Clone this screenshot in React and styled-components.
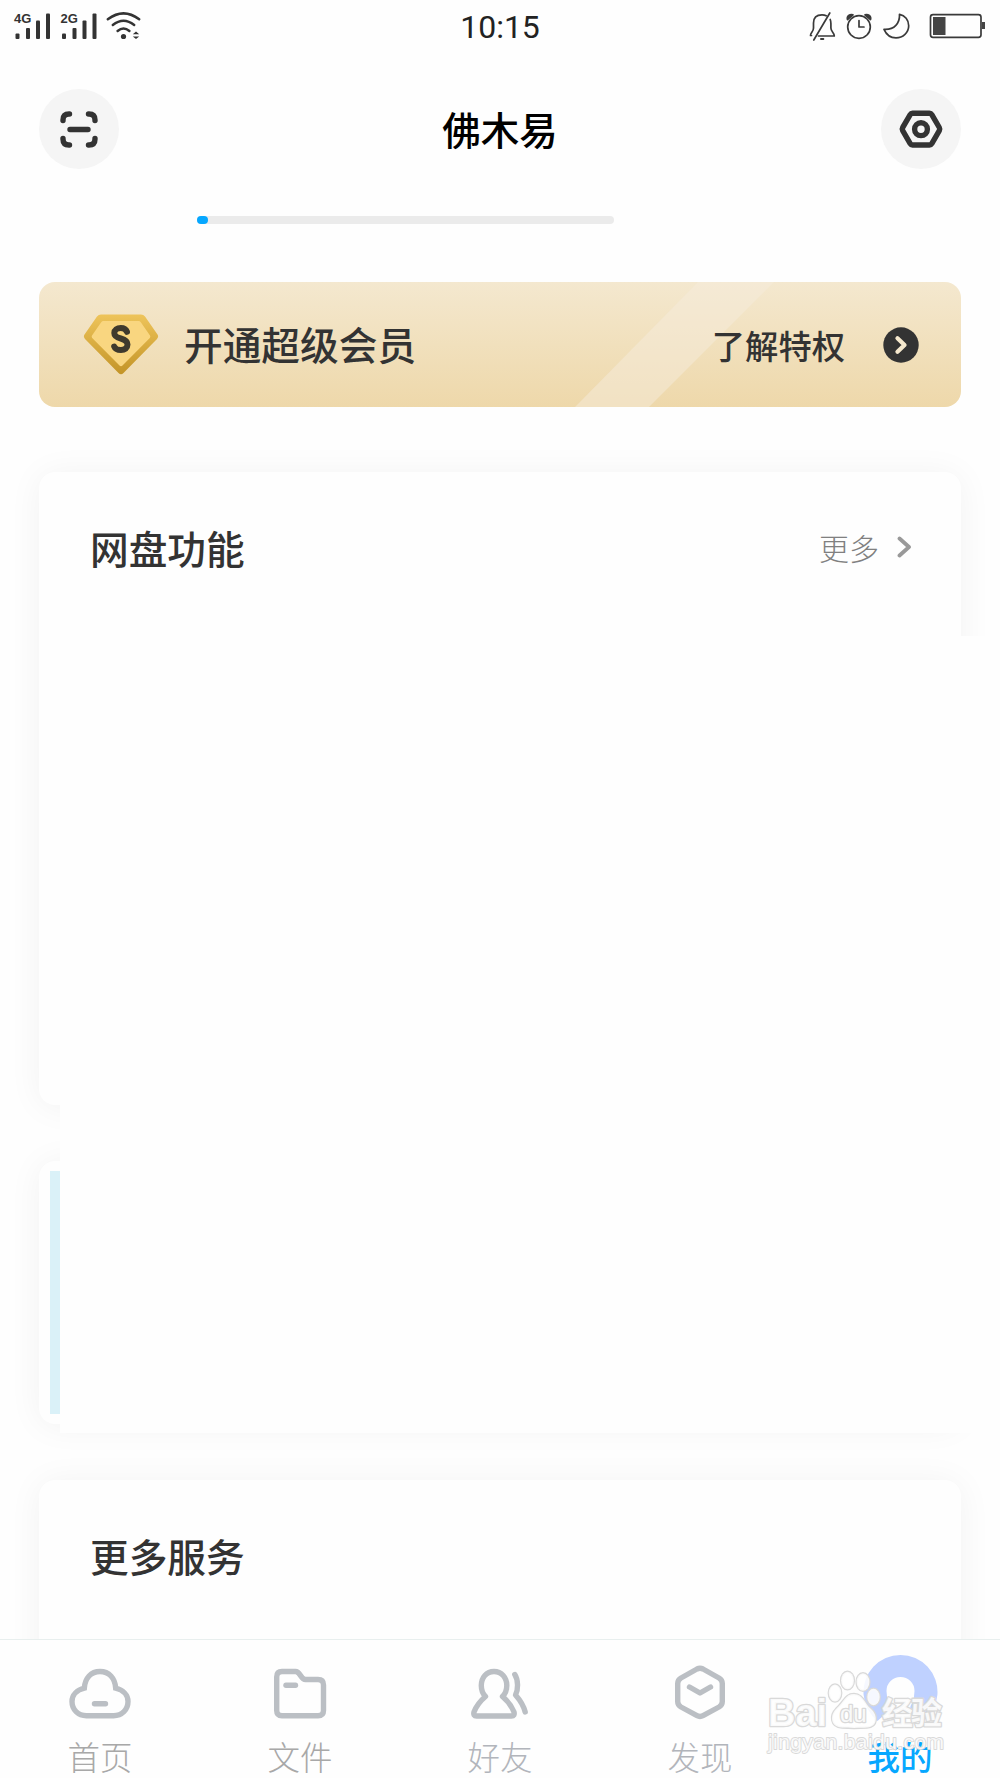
import styled, { createGlobalStyle } from 'styled-components';

const GlobalStyle = createGlobalStyle`
    * {
        box-sizing: border-box;
    }
    body {
        margin: 0;
        background: #fefefe;
        font-family: 'Noto Sans', 'Noto Sans CJK SC', sans-serif;
    }
`;

const Screen = styled.div`
    position: relative;
    display: flex;
    flex-direction: column;
    width: 1000px;
    height: 1778px;
    overflow: hidden;
    background: #fefefe;
    color: #333;
`;

const StatusBar = styled.div`
    display: grid;
    grid-template-columns: 1fr auto 1fr;
    align-items: center;
    height: 52px;
    flex: none;

    svg {
        display: block;
        margin-top: -2px;
    }
    svg:last-child {
        justify-self: end;
    }
`;

const Clock = styled.div`
    font-family: Roboto, sans-serif;
    font-size: 32px;
    line-height: 52px;
    padding-top: 1px;
    color: #222;
`;

const Header = styled.div`
    display: flex;
    align-items: center;
    justify-content: space-between;
    height: 80px;
    margin: 37px 39px 0;
    flex: none;
`;

const RoundButton = styled.div`
    display: flex;
    width: 80px;
    height: 80px;
    border-radius: 50%;
    background: #f5f5f5;
`;

const UserName = styled.div`
    font-family: 'Noto Sans CJK SC', sans-serif;
    font-size: 38.5px;
    font-weight: 500;
    line-height: 78px;
    height: 80px;
    color: #000;
`;

const Capacity = styled.div`
    width: 417px;
    height: 8px;
    margin: 47px 0 58px 197px;
    border-radius: 4px;
    background: #ebebeb;
    flex: none;
`;

const CapacityUsed = styled.div`
    height: 8px;
    border-radius: 4px;
    background: #06a7ff;
`;

const VipBanner = styled.div`
    display: flex;
    align-items: center;
    height: 125px;
    margin: 0 39px;
    padding: 0 42px 0 44px;
    border-radius: 16px;
    background: linear-gradient(#f4e8cf, #eed8aa);
    position: relative;
    overflow: hidden;
    flex: none;

    &::before {
        content: '';
        position: absolute;
        top: 0;
        left: 536px;
        width: 199px;
        height: 125px;
        background: rgba(246, 236, 220, 0.5);
        clip-path: polygon(123px 0, 199px 0, 74px 100%, 0 100%);
    }
    > * {
        position: relative;
    }
`;

const VipTitle = styled.div`
    margin-left: 25px;
    font-family: 'Noto Sans CJK SC', sans-serif;
    font-size: 38.7px;
    font-weight: 500;
    line-height: 123px;
    height: 125px;
`;

const VipLink = styled.div`
    margin: 0 38px 0 auto;
    font-family: 'Noto Sans CJK SC', sans-serif;
    font-size: 33.3px;
    font-weight: 500;
    line-height: 125px;
`;

const Card = styled.div`
    height: ${({ $height }) => $height}px;
    margin: ${({ $gap }) => $gap}px 39px 0;
    padding: ${({ $padding }) => $padding || '0 48px 0 51px'};
    border-radius: 16px;
    background: #fefefe;
    box-shadow: 0 2px 34px rgba(0, 0, 0, 0.05);
    flex: none;
`;

const CardHeader = styled.div`
    display: flex;
    align-items: center;
    justify-content: space-between;
    height: ${({ $height }) => $height}px;
`;

const CardTitle = styled.div`
    font-family: 'Noto Sans CJK SC', sans-serif;
    font-size: 38.7px;
    font-weight: 500;
    line-height: 56px;
`;

const More = styled.div`
    display: flex;
    align-items: center;
    gap: 18px;
    font-family: 'Noto Sans CJK SC', sans-serif;
    font-size: 30px;
    font-weight: 300;
    line-height: 44px;
    color: #808080;
`;

const AdBanner = styled.div`
    height: 243px;
    background: #daf1f8;
`;

const BlankPanel = styled.div`
    position: absolute;
    top: 636px;
    left: 60px;
    width: 925px;
    height: 797px;
    background: #fefefe;
`;

const TabBar = styled.div`
    position: absolute;
    left: 0;
    right: 0;
    bottom: 0;
    display: grid;
    grid-template-columns: repeat(5, 1fr);
    height: 139px;
    border-top: 1px solid #e8efee;
    background: #fefefe;
`;

const Tab = styled.div`
    display: flex;
    flex-direction: column;
    align-items: center;
    padding-top: 14px;
    font-family: 'Noto Sans CJK SC', sans-serif;
    font-size: 32.5px;
    font-weight: ${({ $active }) => ($active ? 500 : 300)};
    line-height: 42px;
    color: ${({ $color }) => $color};

    svg {
        display: block;
        margin-bottom: 1px;
        flex: none;
    }
`;

const Watermark = styled.svg`
    position: absolute;
    left: 760px;
    top: 1660px;
`;

const SignalIcons = () => (
    <svg width="150" height="50" fill="#333">
        {[0, 46.5].map((x) => (
            <g key={x} transform={`translate(${x} 0)`}>
                <rect x="15.5" y="32.5" width="4" height="5.5" rx="1" />
                <rect x="26" y="27" width="4" height="11" rx="1" />
                <rect x="36" y="19.5" width="4" height="18.5" rx="1" />
                <rect x="46" y="12.5" width="4" height="25.5" rx="1" />
                <text x="14" y="22" fontFamily="Liberation Sans, sans-serif" fontSize="13" fontWeight="700">
                    {x ? '2G' : '4G'}
                </text>
            </g>
        ))}
        <g fill="none" stroke="#333" strokeWidth="2.5" strokeLinecap="round">
            <path d="M107.8 18.2Q123.5 6.5 139.2 18.2" />
            <path d="M112.8 24Q123.5 15.6 134.2 24" />
            <path d="M117.6 30Q123.5 25 129.4 30" />
        </g>
        <circle cx="123.5" cy="35.5" r="2.6" />
        <path d="M132.8 33.2L136 30.6L139.2 33.2ZM132.8 35.4H139.2L136 38Z" />
    </svg>
);

const SystemIcons = () => (
    <svg width="220" height="50" fill="none" stroke="#3a3a3a" strokeWidth="1.7" strokeLinecap="round" strokeLinejoin="round">
        <path d="M31.5 34.5H30.5C30.5 31.5 33.5 31 33.5 27V22C33.5 16.5 37 13.8 42 13.8C43.5 13.8 45 14.1 46.2 14.8" />
        <path d="M50.2 18.5C50.8 20 50.9 21 50.9 22.5V27C51 31 54.3 31.5 54.3 35H38.5" />
        <path d="M49.8 12L33.8 39" />
        <path d="M41 38H43.3" strokeWidth="2" />
        <circle cx="79" cy="26" r="11.3" />
        <path d="M79 19.5V26H84" />
        <path d="M67.5 18.5C66.5 15 70 12.8 73 13.8ZM90.5 18.5C91.5 15 88 12.8 85 13.8Z" fill="#3a3a3a" />
        <path
            d="M99.5 13.3C100 22 94.5 29 84 28.3C86.5 34 90.5 36.8 96 36.8C103 36.8 108.7 31.5 108.7 24.8C108.7 19 105 14.5 99.5 13.3Z"
            transform="translate(20 0)"
        />
        <rect x="150.5" y="13.7" width="50.5" height="22.6" rx="2.5" />
        <rect x="153" y="16" width="12.5" height="18" fill="#444" stroke="none" />
        <rect x="202" y="21" width="3" height="7" fill="#444" stroke="none" />
    </svg>
);

const ScanIcon = () => (
    <svg width="80" height="80" fill="none" stroke="#333" strokeWidth="5.4" strokeLinecap="round" strokeLinejoin="round">
        <path d="M24 31.5V31Q24 25 30 25H30.5M49.5 25H50Q56 25 56 31V31.5M56 49.5V50Q56 56 50 56H49.5M30.5 56H30Q24 56 24 50V49.5M31 40.5H49" />
    </svg>
);

const SettingIcon = () => (
    <svg width="80" height="80" fill="none" stroke="#333" strokeWidth="5.4" strokeLinejoin="round">
        <path d="M31.5 24.3H48.5Q50 24.3 50.8 25.7L58.3 38.5Q59.2 40 58.3 41.7L50.8 54.7Q50 56 48.5 56H31.5Q30 56 29.2 54.7L21.7 41.7Q20.8 40 21.7 38.5L29.2 25.7Q30 24.3 31.5 24.3Z" />
        <circle cx="40" cy="40.2" r="6.4" />
    </svg>
);

const VipIcon = () => (
    <svg width="76" height="61" viewBox="0 0 76 61">
        <defs>
            <linearGradient id="vip" x1="0" y1="0" x2="0" y2="1">
                <stop offset="0" stopColor="#eec45a" />
                <stop offset="1" stopColor="#c39427" />
            </linearGradient>
        </defs>
        <path d="M18 .5H58Q60.5 .5 62 2.500L74.5 20.5Q76 22.5 74 25L40.5 59Q38 61.5 35.5 59L2 25Q0 22.5 1.500 20.5L14 2.500Q15.5 .5 18 .5Z" fill="url(#vip)" />
        <path d="M20.5 7H55.5Q57 7 57.8 8.200L67 21.5Q67.8 22.8 66.8 24L39.5 51.5Q38 53 36.5 51.5L9.200 24Q8.200 22.8 9 21.5L18.2 8.200Q19 7 20.5 7Z" fill="#f9d680" />
        <path d="M44 17.8C43 15.2 41 14 37.8 14C34 14 31.3 16 31.3 19C31.3 22.5 34 23.5 37.8 24.5C42 25.6 44.5 27.3 44.5 30.6C44.5 34 41.8 36 38 36C34.5 36 32 34.7 31.2 32.5" fill="none" stroke="#3f3a2d" strokeWidth="6" strokeLinecap="round" />
    </svg>
);

const ArrowIcon = () => (
    <svg width="36" height="36">
        <circle cx="18" cy="18" r="17.7" fill="#333" />
        <path d="M14.5 11.3L21.5 18L14.5 24.7" fill="none" stroke="#f5e8cd" strokeWidth="4.3" strokeLinecap="round" strokeLinejoin="round" />
    </svg>
);

const ChevronIcon = () => (
    <svg width="16" height="24" fill="none" stroke="#999" strokeWidth="3.8" strokeLinecap="round" strokeLinejoin="round">
        <path d="M2.5 3.5L12 12L2.5 20.5" />
    </svg>
);

const TabIcon = ({ children }) => (
    <svg width="80" height="80" fill="none" stroke="#bbbfc4" strokeWidth="5.4" strokeLinecap="round" strokeLinejoin="round">
        {children}
    </svg>
);

const tabs = [
    {
        text: '首页',
        color: '#a8a8a8',
        icon: (
            <TabIcon>
                <path
                    d="M24.3 34.2C25 24 31 17.5 40 17.5C49 17.5 55 24 55.7 34.2C63 36 68 41 68 47.5C68 55.5 62 61.7 53.5 61.7H26.5C18 61.7 12 55.5 12 47.5C12 41 17 36 24.3 34.2Z"
                    strokeLinejoin="miter"
                />
                <path d="M34.5 49.7H45.5" />
            </TabIcon>
        ),
    },
    {
        text: '文件',
        color: '#a8a8a8',
        icon: (
            <TabIcon>
                <path d="M22 17.5H35.5C40.5 17.5 40.5 25.5 45.5 25.5H58Q63.5 25.5 63.5 31V56.5Q63.5 61.7 58 61.7H22Q16.7 61.7 16.7 56.5V23Q16.7 17.5 22 17.5Z" />
                <path d="M26 31.3H35.5" />
            </TabIcon>
        ),
    },
    {
        text: '好友',
        color: '#b2b5bb',
        icon: (
            <TabIcon>
                <path d="M25.5 42.5C21.5 38.5 21.3 34 21.3 31.5C21.3 23.5 26.5 17.5 34 17.5C41.5 17.5 46.8 23.5 46.8 31.5C46.8 34 46.5 38.5 42.5 42.5C49 48 51.5 51.5 54 58Q55 62 51.5 62H16.5Q13 62 14 58C16.5 51.5 19 48 25.5 42.5Z" />
                <path d="M54.8 20.5C58.5 26 58.2 36 55.5 41C60 46 63.5 51.5 65.2 58" />
            </TabIcon>
        ),
    },
    {
        text: '发现',
        color: '#b2b5bb',
        icon: (
            <TabIcon>
                <path d="M37 15Q40 13.4 43 15L59 24Q62.3 26 62.3 29.5V47.5Q62.3 51 59 53L43 61.7Q40 63.3 37 61.7L21 53Q17.7 51 17.7 47.5V29.5Q17.7 26 21 24Z" />
                <path d="M29.5 33L40 39L50.5 33" />
            </TabIcon>
        ),
    },
    {
        text: '我的',
        color: '#06a7ff',
        active: true,
        icon: (
            <svg width="80" height="80">
                <path
                    d="M17.5 67A37 37 0 1 1 63.5 67Q54 58 50 56.5Q49.5 53 52 49Q54.5 44 54.5 37A14 14 0 0 0 26.500 37Q26.500 44 29 49Q31.500 53 31 56.5Q27 58 17.5 67Z"
                    fill="#bfd1ff"
                />
            </svg>
        ),
    },
];

const BaiduMark = () => (
    <Watermark width="200" height="110" fill="rgba(255,255,255,.85)" stroke="#d9d9d9" strokeWidth="2.6" paintOrder="stroke" strokeLinejoin="round">
        <text x="8" y="66" fontFamily="Liberation Sans, sans-serif" fontWeight="700" fontSize="38" textLength="59">
            Bai
        </text>
        <text x="122" y="64" fontFamily="Noto Sans CJK SC, sans-serif" fontWeight="700" fontSize="31" textLength="60">
            经验
        </text>
        <g strokeWidth="2.4">
            <ellipse cx="75" cy="33" rx="6.2" ry="8.6" />
            <ellipse cx="87.5" cy="20.5" rx="6.4" ry="8.8" />
            <ellipse cx="103" cy="22" rx="6.4" ry="8.8" />
            <ellipse cx="113.5" cy="37" rx="6.2" ry="8.2" />
            <path d="M94 34C103 34 104 43 111 49C118 55 118 67 107 67.5C100 68 88 68 82 67.5C70 67 70 55 76 49C84 42 85 34 94 34Z" />
        </g>
        <text x="80" y="61.5" fontFamily="Liberation Sans, sans-serif" fontSize="24" strokeWidth="2.6">
            du
        </text>
        <text x="8" y="89" fontFamily="Liberation Sans, sans-serif" fontSize="21" strokeWidth="1.8" textLength="176">
            jingyan.baidu.com
        </text>
    </Watermark>
);

const App = () => {
    return (
        <Screen>
            <GlobalStyle />
            <StatusBar>
                <SignalIcons />
                <Clock>10:15</Clock>
                <SystemIcons />
            </StatusBar>
            <Header>
                <RoundButton>
                    <ScanIcon />
                </RoundButton>
                <UserName>佛木易</UserName>
                <RoundButton>
                    <SettingIcon />
                </RoundButton>
            </Header>
            <Capacity>
                <CapacityUsed style={{ width: 11 }} />
            </Capacity>
            <VipBanner>
                <VipIcon />
                <VipTitle>开通超级会员</VipTitle>
                <VipLink>了解特权</VipLink>
                <ArrowIcon />
            </VipBanner>
            <Card $height={633} $gap={65}>
                <CardHeader $height={150}>
                    <CardTitle>网盘功能</CardTitle>
                    <More>
                        更多
                        <ChevronIcon />
                    </More>
                </CardHeader>
            </Card>
            <Card $height={263} $gap={56} $padding="10px 11px">
                <AdBanner />
            </Card>
            <Card $height={260} $gap={56}>
                <CardHeader $height={150}>
                    <CardTitle>更多服务</CardTitle>
                </CardHeader>
            </Card>
            <BlankPanel />
            <TabBar>
                {tabs.map(({ text, color, active, icon }) => (
                    <Tab key={text} $color={color} $active={active}>
                        {icon}
                        {text}
                    </Tab>
                ))}
            </TabBar>
            <BaiduMark />
        </Screen>
    );
};

export default App;
